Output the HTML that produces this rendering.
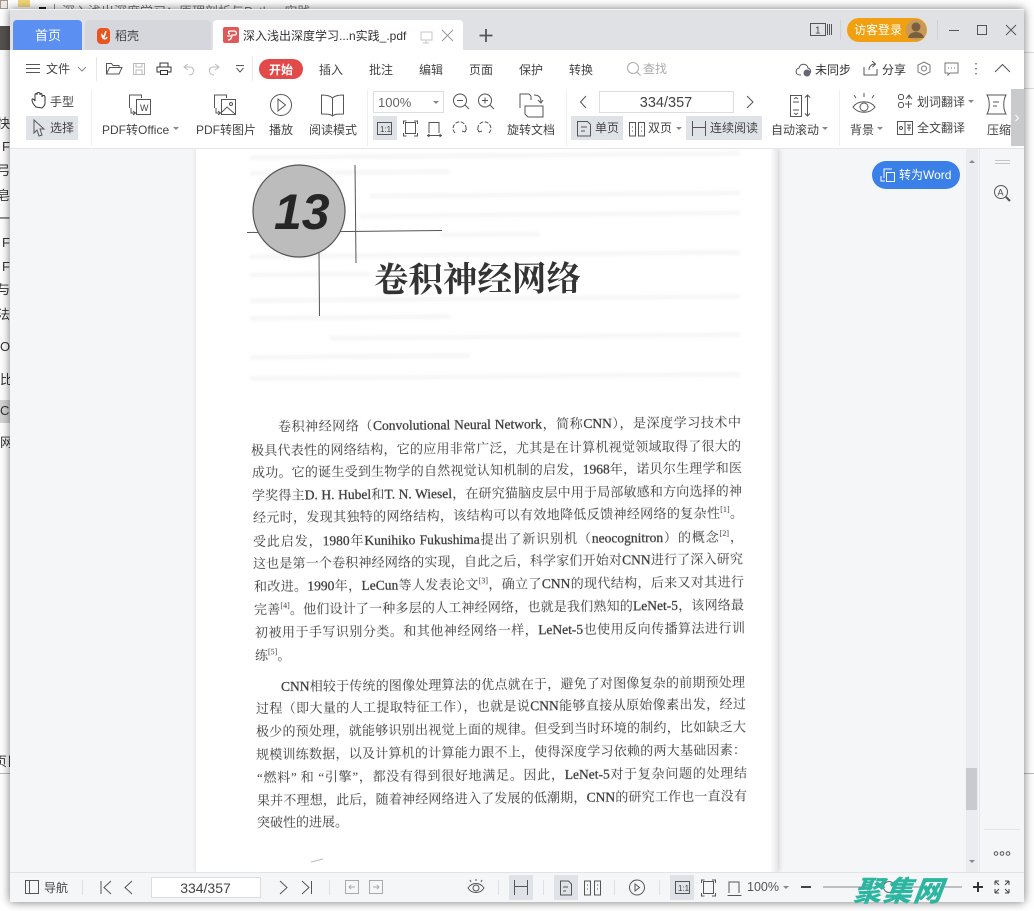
<!DOCTYPE html>
<html lang="zh"><head><meta charset="utf-8"><title>PDF</title>
<style>
html,body{margin:0;padding:0;background:#fff}
body{width:1034px;height:911px;position:relative;overflow:hidden;font-family:"Liberation Sans","Noto Sans CJK SC",sans-serif}
.abs{position:absolute}
.peek{position:absolute;left:-6px;width:16px;height:16px;font-size:13px;line-height:16px;color:#333;text-align:right;white-space:nowrap;overflow:hidden}
#win{position:absolute;left:10px;top:9px;width:1014px;height:893px;background:#f5f6f8;box-shadow:0 0 9px rgba(0,0,0,.55);overflow:hidden}
#page{position:absolute;left:196px;top:148px;width:582px;height:724px;background:#fff;box-shadow:1px 0 5px rgba(0,0,0,.16)}
.l{position:absolute;height:20px;line-height:20px;font:13px/20px "Liberation Serif","Noto Serif CJK SC",serif;color:#3a3a3a;text-align:justify;text-align-last:justify;transform:rotate(-.55deg);transform-origin:left center;filter:blur(.25px)}
.l.e{text-align-last:left}
.l b{font-family:"Liberation Serif";font-weight:400;font-size:13.5px;-webkit-text-stroke:.25px #3a3a3a}
.l sup{font-size:8px;line-height:0;font-family:"Liberation Serif"}
.g{position:absolute;height:5px;background:#f7f7f7;filter:blur(1px);transform:rotate(-.5deg)}
svg{position:absolute;left:0;top:0}
svg text{font-family:"Liberation Sans","Noto Sans CJK SC",sans-serif;font-size:12px;fill:#444;stroke:none}
.i{fill:none;stroke:#555;stroke-width:1}
</style></head><body>

<!-- background window peeking -->
<div class="abs" style="left:0;top:26px;width:10px;height:24px;background:#55514e"></div>
<div class="abs" style="left:0;top:0;width:8px;height:9px;background:#f4e9df;border:1px solid #999;box-sizing:border-box"></div>
<div class="abs" style="left:18px;top:0;width:12px;height:7px;background:#f3d67a"></div>
<div class="abs" style="left:39px;top:7px;width:7px;height:2px;background:#222"></div>
<div class="abs" style="left:54px;top:4px;width:1px;height:6px;background:#888"></div>
<div class="abs" style="left:62px;top:3px;height:18px;font-size:13px;line-height:18px;color:#777;white-space:nowrap">深入浅出深度学习：原理剖析与Python实践</div>
<div class="abs" style="left:0;top:400px;width:10px;height:23px;background:#d4d4d4"></div>
<div class="peek" style="top:116px">快</div><div class="peek" style="top:139px">F</div><div class="peek" style="top:163px">弓</div><div class="peek" style="top:188px">皂</div><div class="peek" style="top:211px">一</div><div class="peek" style="top:235px">F</div><div class="peek" style="top:259px">F</div><div class="peek" style="top:282px">与</div><div class="peek" style="top:307px">法</div>
<div class="peek" style="top:339px;left:0;text-align:left;width:10px">On</div><div class="peek" style="top:372px;left:0;text-align:left;width:10px">比</div><div class="peek" style="top:403px;left:0;text-align:left;width:10px">CC</div><div class="peek" style="top:435px;left:0;text-align:left;width:10px">网</div><div class="peek" style="top:754px">页目</div>
<div class="abs" style="left:1024px;top:52px;width:10px;height:1px;background:#ddd"></div>
<div class="abs" style="left:1024px;top:88px;width:10px;height:1px;background:#ddd"></div>
<div class="abs" style="left:1024px;top:773px;width:10px;height:1px;background:#bbb"></div>
<div class="abs" style="left:0;top:773px;width:10px;height:1px;background:#bbb"></div>

<div id="win"></div>

<div id="page"></div>
<div class="abs" style="left:770px;top:148px;width:8px;height:724px;background:linear-gradient(90deg,#fff,#e6e6e6)"></div>

<!-- show-through lines -->
<div class="g" style="left:250px;top:153px;width:490px"></div>
<div class="g" style="left:250px;top:170px;width:200px"></div>
<div class="g" style="left:370px;top:192px;width:370px"></div>
<div class="g" style="left:360px;top:212px;width:380px"></div>
<div class="g" style="left:440px;top:232px;width:100px"></div>
<div class="g" style="left:250px;top:252px;width:490px"></div>
<div class="g" style="left:250px;top:272px;width:120px"></div>
<div class="g" style="left:250px;top:296px;width:490px"></div>
<div class="g" style="left:250px;top:315px;width:200px"></div>
<div class="g" style="left:330px;top:334px;width:410px"></div>
<div class="g" style="left:250px;top:354px;width:220px"></div>
<div class="g" style="left:250px;top:374px;width:490px"></div>

<!-- chapter graphic -->
<svg width="1034" height="911" style="filter:blur(.3px)">
<line x1="247" y1="232.5" x2="442" y2="230.500" stroke="#555" stroke-width="1"/>
<line x1="355" y1="165" x2="356" y2="263" stroke="#555" stroke-width="1"/>
<line x1="319" y1="253" x2="319.500" y2="316" stroke="#555" stroke-width="1"/>
<circle cx="299" cy="211" r="46" fill="#bcbcbc" stroke="#555" stroke-width="1.2"/>
<text x="274" y="229" style="font:italic 700 50px 'Liberation Sans';fill:#262626">13</text>
<text x="374" y="292" transform="rotate(-.5 374 292)" style="font:700 34.500px 'Noto Serif CJK SC',serif;fill:#333">卷积神经网络</text>
<path d="M311 862l12-3" stroke="#bbb" fill="none"/>
</svg>

<!-- body text -->
<div class="l" style="left:278px;top:417px;width:463px">卷积神经网络（<b>Convolutional Neural Network</b>，简称<b>CNN</b>），是深度学习技术中</div>
<div class="l" style="left:251px;top:441px;width:490px">极具代表性的网络结构，它的应用非常广泛，尤其是在计算机视觉领域取得了很大的</div>
<div class="l" style="left:251.500px;top:463px;width:490px">成功。它的诞生受到生物学的自然视觉认知机制的启发，<b>1968</b>年，诺贝尔生理学和医</div>
<div class="l" style="left:252px;top:486px;width:490px">学奖得主<b>D. H. Hubel</b>和<b>T. N. Wiesel</b>，在研究猫脑皮层中用于局部敏感和方向选择的神</div>
<div class="l" style="left:252.500px;top:508px;width:490px">经元时，发现其独特的网络结构，该结构可以有效地降低反馈神经网络的复杂性<sup>[1]</sup>。</div>
<div class="l" style="left:253px;top:532px;width:490px">受此启发，<b>1980</b>年<b>Kunihiko Fukushima</b>提出了新识别机（<b>neocognitron</b>）的概念<sup>[2]</sup>，</div>
<div class="l" style="left:253px;top:554px;width:490px">这也是第一个卷积神经网络的实现，自此之后，科学家们开始对<b>CNN</b>进行了深入研究</div>
<div class="l" style="left:254px;top:577px;width:490px">和改进。<b>1990</b>年，<b>LeCun</b>等人发表论文<sup>[3]</sup>，确立了<b>CNN</b>的现代结构，后来又对其进行</div>
<div class="l" style="left:254px;top:600px;width:490px">完善<sup>[4]</sup>。他们设计了一种多层的人工神经网络，也就是我们熟知的<b>LeNet-5</b>，该网络最</div>
<div class="l" style="left:255px;top:623px;width:490px">初被用于手写识别分类。和其他神经网络一样，<b>LeNet-5</b>也使用反向传播算法进行训</div>
<div class="l e" style="left:255px;top:646px;width:100px">练<sup>[5]</sup>。</div>

<div class="l" style="left:281px;top:677px;width:464px"><b>CNN</b>相较于传统的图像处理算法的优点就在于，避免了对图像复杂的前期预处理</div>
<div class="l" style="left:256px;top:699px;width:490px">过程（即大量的人工提取特征工作），也就是说<b>CNN</b>能够直接从原始像素出发，经过</div>
<div class="l" style="left:256px;top:722px;width:490px">极少的预处理，就能够识别出视觉上面的规律。但受到当时环境的制约，比如缺乏大</div>
<div class="l" style="left:256px;top:745px;width:490px">规模训练数据，以及计算机的计算能力跟不上，使得深度学习依赖的两大基础因素：</div>
<div class="l" style="left:256.500px;top:768px;width:490px">“燃料” 和 “引擎”，都没有得到很好地满足。因此，<b>LeNet-5</b>对于复杂问题的处理结</div>
<div class="l" style="left:257px;top:791px;width:490px">果并不理想，此后，随着神经网络进入了发展的低潮期，<b>CNN</b>的研究工作也一直没有</div>
<div class="l e" style="left:257px;top:813px;width:120px">突破性的进展。</div>

<!-- chrome -->
<svg width="1034" height="911">
<!-- title bar -->
<rect x="10" y="10" width="1014" height="40" fill="#dfe1e5"/>
<path d="M13 50V24a4 4 0 0 1 4-4h61a4 4 0 0 1 4 4v26z" fill="#5b8ff2"/>
<text x="35" y="40" style="font-size:13px;fill:#fff">首页</text>
<path d="M85 50V24a4 4 0 0 1 4-4h118a4 4 0 0 1 4 4v26z" fill="#d5d7dc"/>
<rect x="97" y="28" width="13" height="16" rx="4" fill="#ea5420"/>
<path d="M106 31l-2 6-2-2c0 4 4 5 5 2" fill="none" stroke="#fff" stroke-width="1.5"/>
<text x="115" y="40" style="font-size:12px">稻壳</text>
<path d="M213 50V24a4 4 0 0 1 4-4h242a4 4 0 0 1 4 4v26z" fill="#fff"/>
<rect x="223" y="27" width="16" height="16" rx="2" fill="#dd5a5a"/>
<path d="M228 40c3 0 4-3 4-5h3c2 0 2-4-1-4h-4c-2 0-2 3 0 3M227 36h4" fill="none" stroke="#fff" stroke-width="1.3"/>
<text x="243" y="40" style="font-size:12px;fill:#333">深入浅出深度学习...n实践_.pdf</text>
<g class="i" style="stroke:#c4c6ca"><rect x="421" y="32" width="11" height="8"/><path d="M426 40v3M423 43h6"/></g>
<path d="M442 30l11 11M453 30l-11 11" class="i" style="stroke:#999"/>
<path d="M486 29v13M479.500 35.500h13" fill="none" stroke="#555" stroke-width="1.8"/>
<g class="i"><rect x="810.500" y="23.500" width="15" height="12"/><path d="M827.500 24v11M829.500 24v11M831.500 24v11"/></g>
<text x="815" y="33.500" style="font-size:10px">1</text>
<path d="M840.500 20v20M937.500 20v20" stroke="#cfd1d5"/>
<rect x="847" y="18" width="80" height="24" rx="12" fill="#f0a010"/>
<text x="854" y="34" style="font-size:12px;fill:#fff">访客登录</text>
<circle cx="916" cy="30" r="10.500" fill="#c89a5a"/>
<circle cx="916" cy="27" r="4.500" fill="#7a5f3e"/>
<path d="M908 38c1-8 15-8 16 0" fill="#7a5f3e"/>
<path d="M949 30.500h10" class="i"/>
<rect x="977.500" y="25.500" width="9" height="9" class="i"/>
<path d="M1006 25l10 10M1016 25l-10 10" class="i"/>

<!-- ribbon white -->
<rect x="10" y="50" width="1014" height="98" fill="#fff"/>
<path d="M10 148.500h1014" stroke="#e4e5e8"/>

<!-- row 2 -->
<path d="M26 64.500h14M26 68.500h14M26 72.500h14" class="i"/>
<text x="46" y="73">文件</text>
<path d="M78 67l4 4 4-4" class="i" style="stroke:#888"/>
<path d="M96.500 57v24M252.500 57v24" stroke="#e6e7ea"/>
<path d="M106.500 74V63.500h5l1.500 2h6v2M106.500 74l3-6.500h12.500l-3 6.500z" class="i"/>
<g class="i" style="stroke:#bbb"><rect x="133.500" y="63.500" width="11" height="11"/><path d="M136 64v3h6v-3M136 74v-4h6v4"/></g>
<g class="i" style="stroke:#333"><path d="M160 67v-4h8v4M160 72h-3v-5h14v5h-3"/><rect x="160.500" y="70.500" width="7" height="4"/></g>
<path d="M188 64l-4 3 4 3M184 67h6c5 0 5 8-1 8" class="i" style="stroke:#bbb"/>
<path d="M215 64l4 3-4 3M219 67h-6c-5 0-5 8 1 8" class="i" style="stroke:#bbb"/>
<path d="M236 65.500h8M236.500 68l3.500 4 3.500-4" class="i"/>
<rect x="259" y="59" width="44" height="20" rx="10" fill="#e24a4a"/>
<text x="269" y="74" style="fill:#fff;font-weight:700">开始</text>
<text x="319" y="74">插入</text><text x="369" y="74">批注</text><text x="419" y="74">编辑</text><text x="469" y="74">页面</text><text x="519" y="74">保护</text><text x="569" y="74">转换</text>
<g class="i" style="stroke:#aaa"><circle cx="633" cy="68" r="5.500"/><path d="M637 72l3.500 3.500"/></g>
<text x="643" y="73" style="fill:#aaa">查找</text>
<path d="M801 75h-1c-5 0-5-6-1-7 1-5 8-5 9 0 3 1 3 4 2 5" class="i"/><circle cx="807" cy="73" r="3.500" fill="#667"/>
<text x="815" y="74" style="fill:#333">未同步</text>
<path d="M864 67v8h13v-6M869 70c0-4 3-6 6-6M872 61l3.500 3-3 3" class="i"/>
<text x="882" y="74" style="fill:#333">分享</text>
<g class="i" style="stroke:#777"><path d="M924 62l6 3v7l-6 3-6-3v-7z"/><circle cx="924" cy="68.500" r="2.500"/></g>
<g class="i" style="stroke:#777"><path d="M945 63h13v10h-8l-2 2v-2h-3z"/><path d="M948 68h1M951 68h1M954 68h1"/></g>
<path d="M976 63v1.500M976 68v1.500M976 73v1.500" stroke="#666" stroke-width="1.400"/>
<path d="M995 72l7.500-7.500 7.500 7.500" class="i"/>

<!-- row 3 -->
<path d="M91.500 90v56M367.500 90v56M566.500 90v56M839.500 90v56" stroke="#eceef0"/>
<path d="M36 107c-2-2-4-5-4-7s2-1 3 1v-6c0-2 2-2 2 0v-1c0-2 3-2 3 0v1c0-2 2-2 2 0v2c0-2 3-2 3 0v6c0 3-2 4-3 5z" class="i" style="stroke:#333"/>
<text x="50" y="106">手型</text>
<rect x="26" y="116" width="52" height="24" fill="#dfe3e8"/>
<path d="M34 120l10 9h-4l2 6-3 1-2-6-3 3z" class="i"/>
<text x="50" y="132">选择</text>
<g class="i"><path d="M129.500 108v-13h12v3"/><rect x="136.500" y="99.500" width="14" height="15"/><path d="M131 108v5h5M133 111l2.500 2-2.500 2"/></g>
<text x="140" y="111" style="font-size:9px">W</text>
<text x="102" y="134">PDF转Office</text>
<path d="M173 127h6l-3 3z" fill="#888"/>
<g class="i"><path d="M214.500 108v-13h12v3"/><rect x="221.500" y="99.500" width="14" height="15"/><path d="M216 108v5h5M218 111l2.500 2-2.500 2M222 112l5-5 8 7"/><circle cx="231" cy="104" r="1.500"/></g>
<text x="196" y="134">PDF转图片</text>
<circle cx="281" cy="105" r="10.500" class="i"/><path d="M278 99l7.500 6-7.500 6z" class="i"/>
<text x="269" y="134">播放</text>
<path d="M332.500 98c-2-2-6-3-11-3v19c5 0 9 0 11 2 2-2 6-2 11-2V95c-5 0-9 1-11 3zv18" class="i"/>
<text x="309" y="134">阅读模式</text>
<rect x="373.500" y="91.500" width="70" height="21" fill="#fff" stroke="#dcdde0"/>
<text x="378" y="107" style="font-size:13px;fill:#666">100%</text>
<path d="M433 101h6l-3 3z" fill="#888"/>
<g class="i"><circle cx="460" cy="100.500" r="6.500"/><path d="M457 100.500h6M465 105l4 4"/></g>
<g class="i"><circle cx="485" cy="100.500" r="6.500"/><path d="M482 100.500h6M485 97.500v6M490 105l4 4"/></g>
<rect x="373" y="116" width="24" height="24" fill="#dfe3e8"/>
<rect x="377.500" y="122.500" width="14" height="12" class="i"/>
<text x="380" y="132" style="font-size:8px">1:1</text>
<g class="i"><rect x="405.500" y="122.500" width="10" height="11"/><path d="M403.500 124v-3h3M414 121h3.500v3M403.500 133v3h3M414 136h3.500v-3"/></g>
<path d="M429 133v-10.500h10V133M427.500 135.500h14M429.500 134l-2 1.500 2 1.500M439.500 134l2 1.500-2 1.500" class="i"/>
<path d="M455 133a6.500 6.500 0 1 1 10-1M465 132l-3-1M465 132l1.500-3" class="i" stroke-dasharray="4 1.500"/>
<path d="M489 133a6.500 6.500 0 1 0-10-1M479 132l3-1M479 132l-1.500-3" class="i" stroke-dasharray="4 1.500"/>
<g class="i"><path d="M520 108V94h9l2 2M531 96v4"/><path d="M525 106h18v11h-15l-3-3z"/><path d="M534 95c5 0 7 3 7 7M538 100l3 3 2-3"/></g>
<text x="507" y="134">旋转文档</text>
<path d="M586 96l-5.500 6 5.500 6M747 96l6 6-6 6" class="i"/>
<rect x="599.500" y="91.500" width="134" height="21" fill="#fff" stroke="#dcdde0"/>
<text x="666" y="107" text-anchor="middle" style="font-size:14.500px;fill:#444">334/357</text>
<rect x="571" y="116" width="52" height="24" fill="#dfe3e8"/>
<path d="M577.500 121.500h10l3 3V136h-13zM581 127h6M581 131h4" class="i"/>
<text x="595" y="132">单页</text>
<path d="M629.500 122.500h6V136h-6zM638.500 122.500h6V136h-6zM632 127h1M632 131h1M641 127h1M641 131h1" class="i"/>
<text x="648" y="132">双页</text>
<path d="M676 127h6l-3 3z" fill="#888"/>
<rect x="686" y="116" width="76" height="24" fill="#dfe3e8"/>
<path d="M692.500 121v15M705.500 121v15M692.500 127.500h13" class="i"/>
<text x="710" y="132">连续阅读</text>
<g class="i"><rect x="790.500" y="95.500" width="11" height="21"/><path d="M793 102h6M793 110h6M794 99l2-1.500 2 1.500M794 113l2 1.500 2-1.500M807.500 95v21M805 97.500l2.500-2.500 2.500 2.500M805 113.500l2.500 2.500 2.500-2.500"/></g>
<text x="771" y="134">自动滚动</text>
<path d="M822 127h6l-3 3z" fill="#888"/>
<g class="i"><path d="M853 107c5-7 17-7 22 0-5 7-17 7-22 0z"/><circle cx="864" cy="107" r="4"/><path d="M864 93v4M854 95l2 3M874 95l-2 3"/></g>
<text x="850" y="134">背景</text>
<path d="M877 127h6l-3 3z" fill="#888"/>
<g class="i"><rect x="898.500" y="94.500" width="5" height="5" rx="2"/><rect x="898.500" y="102.500" width="5" height="5" rx="2"/><path d="M906 99l3-4 3 4M909 95v4M905 104h7M908.500 101v7"/></g>
<text x="917" y="106">划词翻译</text>
<path d="M968 100h6l-3 3z" fill="#888"/>
<g class="i"><rect x="897.500" y="121.500" width="15" height="13"/><path d="M905 121v13"/><circle cx="901" cy="128" r="1.500"/><path d="M907 125h4M909 125v6M907 128h4"/></g>
<text x="917" y="132">全文翻译</text>
<path d="M987 95h19c-3 5-3 14 0 19h-19c3-5 3-14 0-19zM993 102h6M993 106h4" class="i"/>
<text x="987" y="134">压缩</text>
<rect x="1011" y="89" width="13" height="57" fill="#c9cacc"/>
<path d="M1015.500 115l3 3-3 3" fill="none" stroke="#fff"/>

<!-- scrollbar & side panel -->
<rect x="966" y="149" width="12" height="723" fill="#ebecf0"/>
<path d="M969 163l3-3 3 3z" fill="#888"/><path d="M969 860l3 3 3-3z" fill="#888"/>
<rect x="966" y="768" width="11" height="42" fill="#c9cacd"/>
<rect x="980" y="149" width="44" height="723" fill="#f5f6f8"/>
<path d="M979.500 149v723" stroke="#e6e7ea"/>
<path d="M995 160.500h15M995 163.500h15" stroke="#c4c5c8"/>
<g class="i"><circle cx="1001" cy="192" r="6.500"/><path d="M1006 197l4 4" stroke-width="2"/></g>
<text x="997.500" y="195.500" style="font-size:9px">A</text>
<path d="M984 829.500h36" stroke="#e4e5e8"/>
<g class="i"><circle cx="996" cy="853.500" r="1.800"/><circle cx="1002" cy="853.500" r="1.800"/><circle cx="1008" cy="853.500" r="1.800"/></g>

<!-- convert pill -->
<rect x="872" y="161" width="88" height="28" rx="14" fill="#3a80e8"/>
<g fill="none" stroke="#fff"><path d="M884 178v-9h8M886.500 172.500h8v9h-8zM881 176v5h4"/></g>
<text x="899" y="179" style="fill:#fff">转为Word</text>

<!-- status bar -->
<rect x="10" y="872" width="1014" height="30" fill="#f5f6f8"/>
<path d="M10 872.500h1014" stroke="#e2e3e6"/>
<rect x="25.500" y="880.500" width="13" height="13" class="i"/><path d="M29.500 881v12" class="i"/>
<text x="44" y="892">导航</text>
<path d="M82.500 880v15M329.500 880v15M498.500 880v15M543.500 880v15M614.500 880v15M659.500 880v15" stroke="#dfe0e3"/>
<path d="M101 881v13M111 881l-7 6.500 7 6.500M132 881l-7 6.500 7 6.500M280 881l7 6.500-7 6.500M302 881l7 6.500-7 6.500M311.500 881v13" class="i"/>
<rect x="151.500" y="877.500" width="109" height="20" fill="#fff" stroke="#dcdde0"/>
<text x="205.500" y="893" text-anchor="middle" style="font-size:14px">334/357</text>
<g class="i" style="stroke:#aaa"><rect x="345.500" y="880.500" width="13" height="13"/><path d="M349 887h6M349 887l2-2M349 887l2 2"/><rect x="369.500" y="880.500" width="13" height="13"/><path d="M373 887h6M379 887l-2-2M379 887l-2 2"/></g>
<g class="i"><path d="M468 888c4-6 12-6 16 0-4 6-12 6-16 0z"/><circle cx="476" cy="888" r="3"/><path d="M476 879v2M470 880l1 2M482 880l-1 2"/></g>
<rect x="509" y="875" width="24" height="25" fill="#dfe3e8"/>
<path d="M514.500 880v15M527.500 880v15M514.500 886.500h13" class="i"/>
<rect x="554" y="875" width="24" height="25" fill="#dfe3e8"/>
<path d="M560.500 881h8l3 3v11h-11zM563 887h5M563 891h3" class="i"/>
<path d="M584.500 881h6v14h-6zM594.500 881h6v14h-6zM587 885h1M587 889h1M597 885h1M597 889h1" class="i"/>
<circle cx="637" cy="887.500" r="7.500" class="i"/><path d="M635 884l4.500 3.500-4.500 3.500z" class="i"/>
<rect x="670" y="875" width="24" height="25" fill="#dfe3e8"/>
<rect x="675.500" y="881.500" width="14" height="12" class="i"/><text x="678" y="891" style="font-size:8px">1:1</text>
<g class="i"><rect x="703.500" y="881.500" width="10" height="12"/><path d="M701.500 883v-3h3M712 880h3.500v3M701.500 893v3h3M712 896h3.500v-3"/></g>
<path d="M729 893v-11h10v11M727.500 895.500h14" class="i"/>
<text x="747" y="891" style="font-size:12.500px;fill:#555">100%</text>
<path d="M783 886h6l-3 3z" fill="#888"/>
<path d="M801 887h10" stroke="#444" stroke-width="2"/>
<path d="M823 887h57M895 887h67" stroke="#888"/>
<circle cx="889" cy="887" r="5.500" fill="#f5f6f8" stroke="#666"/>
<path d="M973 887h10M978 882v10" stroke="#333" stroke-width="2"/>
<path d="M995 881l4 0M995 881v4M995 881l4 4M1009 881h-4M1009 881v4M1009 881l-4 4M995 893h4M995 893v-4M995 893l4-4M1009 893h-4M1009 893v-4M1009 893l-4-4" class="i" style="stroke:#444"/>
</svg>

<!-- watermark -->
<div class="abs" style="left:854px;top:874px;width:96px;height:32px;font:italic 900 28.500px/32px 'Noto Sans CJK SC',sans-serif;color:#2cb5a0;white-space:nowrap;letter-spacing:1.500px;transform:skewX(-8deg)">聚集网</div>
</body></html>
